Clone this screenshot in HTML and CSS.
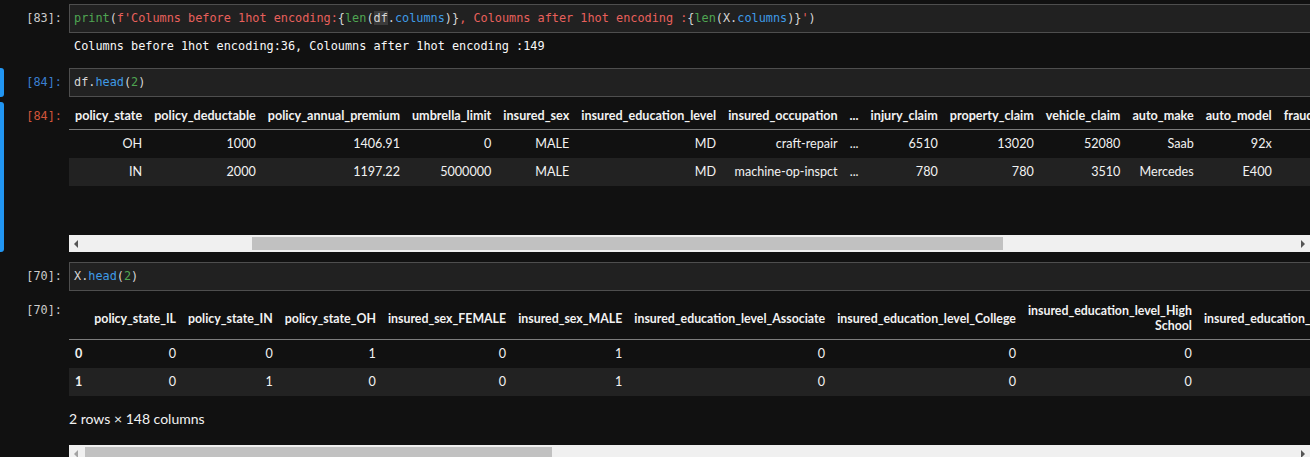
FILE: index.html
```html
<!DOCTYPE html>
<html>
<head>
<meta charset="utf-8">
<title>Notebook</title>
<link rel="stylesheet" href="styles.css">
</head>
<body>
<div class="nb">

  <div class="cell c83">
    <div class="row">
      <div class="gutter"><span class="bar"></span><span class="prompt">[83]:</span></div>
      <div class="editor"><span class="b">print</span>(<span class="s">f'Columns before 1hot encoding:</span>{<span class="b">len</span>(<span class="hl">df</span>.<span class="a">columns</span>)}<span class="s">, Coloumns after 1hot encoding :</span>{<span class="b">len</span>(X.<span class="a">columns</span>)}<span class="s">'</span>)</div>
    </div>
    <div class="row out">
      <div class="gutter"><span class="bar"></span><span class="prompt"></span></div>
      <div class="stream">Columns before 1hot encoding:36, Coloumns after 1hot encoding :149</div>
    </div>
  </div>

  <div class="cell selected">
    <div class="row">
      <div class="gutter"><span class="bar"></span><span class="prompt in-active">[84]:</span></div>
      <div class="editor">df.<span class="a">head</span>(<span class="n">2</span>)</div>
    </div>
    <div class="row out">
      <div class="gutter"><span class="bar"></span><span class="prompt out-active">[84]:</span></div>
      <div class="result">
        <div class="clip">
          <table class="df">
            <thead>
              <tr>
                <th>policy_state</th><th>policy_deductable</th><th>policy_annual_premium</th><th>umbrella_limit</th><th>insured_sex</th><th>insured_education_level</th><th>insured_occupation</th><th>...</th><th>injury_claim</th><th>property_claim</th><th>vehicle_claim</th><th>auto_make</th><th>auto_model</th><th>fraud_reported</th>
              </tr>
            </thead>
            <tbody>
              <tr>
                <td>OH</td><td>1000</td><td>1406.91</td><td>0</td><td>MALE</td><td>MD</td><td>craft-repair</td><td>...</td><td>6510</td><td>13020</td><td>52080</td><td>Saab</td><td>92x</td><td>Y</td>
              </tr>
              <tr>
                <td>IN</td><td>2000</td><td>1197.22</td><td>5000000</td><td>MALE</td><td>MD</td><td>machine-op-inspct</td><td>...</td><td>780</td><td>780</td><td>3510</td><td>Mercedes</td><td>E400</td><td>Y</td>
              </tr>
            </tbody>
          </table>
        </div>
        <div class="hscroll first">
          <span class="arr"><span class="tri left"></span></span>
          <div class="track"><div class="thumb"></div></div>
          <span class="arr"><span class="tri right"></span></span>
        </div>
      </div>
    </div>
  </div>

  <div class="cell">
    <div class="row">
      <div class="gutter"><span class="bar"></span><span class="prompt">[70]:</span></div>
      <div class="editor">X.<span class="a">head</span>(<span class="n">2</span>)</div>
    </div>
    <div class="row out">
      <div class="gutter"><span class="bar"></span><span class="prompt">[70]:</span></div>
      <div class="result">
        <div class="clip">
          <table class="df idx">
            <thead>
              <tr>
                <th></th><th>policy_state_IL</th><th>policy_state_IN</th><th>policy_state_OH</th><th>insured_sex_FEMALE</th><th>insured_sex_MALE</th><th>insured_education_level_Associate</th><th>insured_education_level_College</th><th>insured_education_level_High<br>School</th><th>insured_education_level_JD</th>
              </tr>
            </thead>
            <tbody>
              <tr>
                <th>0</th><td>0</td><td>0</td><td>1</td><td>0</td><td>1</td><td>0</td><td>0</td><td>0</td><td>0</td>
              </tr>
              <tr>
                <th>1</th><td>0</td><td>1</td><td>0</td><td>0</td><td>1</td><td>0</td><td>0</td><td>0</td><td>0</td>
              </tr>
            </tbody>
          </table>
        </div>
        <p class="shape">2 rows × 148 columns</p>
        <div class="hscroll second">
          <span class="arr"><span class="tri left dim"></span></span>
          <div class="track"><div class="thumb"></div></div>
          <span class="arr"><span class="tri right"></span></span>
        </div>
      </div>
    </div>
  </div>

</div>
</body>
</html>
```

FILE: styles.css
```css
html, body {
  margin: 0;
  padding: 0;
  background: #111111;
}

body {
  width: 1310px;
  height: 457px;
  overflow: hidden;
}

.nb {
  padding-top: 4px;
  width: 1310px;
}

.cell {
  margin-bottom: 10px;
}

.row {
  display: flex;
  align-items: stretch;
}

.row.out {
  margin-top: 5px;
}

.gutter {
  width: 69px;
  flex: none;
  display: flex;
  justify-content: space-between;
}

.bar {
  width: 4px;
  border-radius: 0 3px 3px 0;
}

.selected .bar {
  background: #2196f3;
}

.prompt {
  font-family: "DejaVu Sans Mono", monospace;
  font-size: 11.85px;
  line-height: 17px;
  color: #cccccc;
  padding: 6px 7px 0 0;
  white-space: pre;
}

.prompt.in-active {
  color: #3a7fd0;
}

.prompt.out-active {
  color: #d2553a;
}

.editor {
  flex: 1;
  min-width: 0;
  margin-right: -3px;
  background: #212121;
  border: 1px solid #4e4e4e;
  padding: 5px 4px;
  font-family: "DejaVu Sans Mono", monospace;
  font-size: 11.85px;
  line-height: 17px;
  color: #d6d6d6;
  white-space: pre;
}

.b { color: #4fa552; }
.n { color: #4fa552; }
.s { color: #e8605c; }
.a { color: #3f9be6; }
.hl { background: #3b3b3b; }

.stream {
  flex: 1;
  font-family: "DejaVu Sans Mono", monospace;
  font-size: 11.85px;
  line-height: 17px;
  color: #f8f8f8;
  padding: 0 0 3px 5px;
  white-space: pre;
}

.result {
  flex: 1;
  min-width: 0;
}

.clip {
  overflow: hidden;
}

.df {
  border-collapse: collapse;
  border-spacing: 0;
  font-family: Lato, "Liberation Sans", sans-serif;
  font-size: 12.6px;
  color: #f2f2f2;
  white-space: nowrap;
}

.df.idx {
  margin-top: 1px;
}

.df.idx thead th {
  font-size: 12.35px;
}

.df thead th {
  font-weight: 700;
  text-align: right;
  vertical-align: middle;
  padding: 6px;
  line-height: 15px;
  border-bottom: 1px solid #7c7c7c;
}

.df td,
.df tbody th {
  text-align: right;
  padding: 6px;
  line-height: 16px;
}

.df tbody th {
  font-weight: 700;
  text-align: left;
}

.df tbody tr:nth-child(even) {
  background: #222222;
}

.first {
  margin-top: 49px;
}

.shape {
  margin: 15px 0 18px 0;
  font-family: Lato, "Liberation Sans", sans-serif;
  font-size: 14px;
  line-height: 16px;
  color: #f2f2f2;
}

.hscroll {
  display: flex;
  height: 17px;
  background: #f0f0f0;
}

.arr {
  width: 17px;
  flex: none;
  display: flex;
  align-items: center;
  justify-content: center;
}

.tri {
  width: 0;
  height: 0;
  border-top: 4px solid transparent;
  border-bottom: 4px solid transparent;
}

.tri.left {
  border-right: 4px solid #555555;
  margin-right: 3px;
}

.tri.right {
  border-left: 4px solid #555555;
  margin-left: 3px;
}

.tri.left.dim {
  border-right-color: #a3a3a3;
}

.track {
  flex: 1;
  display: flex;
  align-items: center;
}

.thumb {
  height: 13px;
  background: #c1c1c1;
}

.first .thumb {
  margin-left: 166px;
  width: 751px;
}

.second .thumb {
  margin-left: -1px;
  width: 467px;
}
```
